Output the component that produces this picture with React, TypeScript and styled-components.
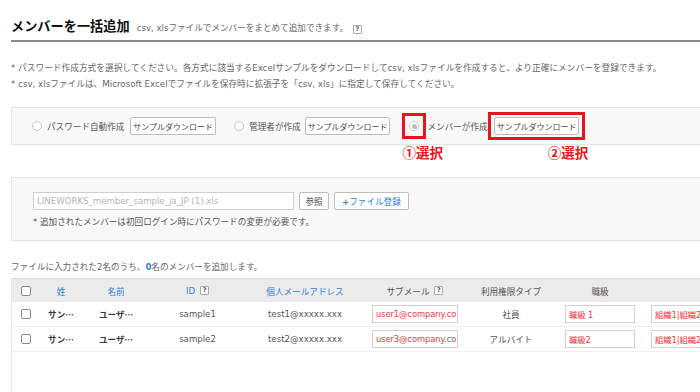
import { createGlobalStyle, styled } from "styled-components";

const GlobalStyle = createGlobalStyle`
  html, body {
    margin: 0;
    background: #fff;
    overflow: hidden;
  }
  body {
    font-family: "DejaVu Sans", "Noto Sans CJK JP", sans-serif;
    color: #555;
  }
  * { box-sizing: border-box; }
`;

const Page = styled.div`
  width: 780px;
  padding-left: 11px;
`;

const Header = styled.div`
  display: flex;
  align-items: baseline;
  height: 42px;
  padding-top: 16px;
  border-bottom: 2px solid #8a8a8a;
  margin-right: 80px;
`;

const Title = styled.h1`
  margin: 0;
  font-size: 13.2px;
  font-weight: 700;
  color: #111;
  font-family: "Noto Sans CJK JP", sans-serif;
`;

const Subtitle = styled.span`
  margin-left: 7px;
  font-size: 8.6px;
  color: #666;
`;

const Help = styled.span<{ $gap?: number }>`
  display: inline-flex;
  align-items: center;
  justify-content: center;
  width: 9px;
  height: 9px;
  margin-left: ${(p) => p.$gap ?? 5}px;
  border: 1px solid #aaa;
  border-radius: 1px;
  background: #fff;
  font-size: 6.5px;
  font-weight: 700;
  color: #555;
  line-height: 1;
  vertical-align: middle;
`;

const Notes = styled.div`
  margin-top: 18px;
  font-size: 8.7px;
  line-height: 16px;
  color: #666;
`;

const Panel = styled.div<{ $height: number; $top: number }>`
  margin-top: ${(p) => p.$top}px;
  height: ${(p) => p.$height}px;
  background: #f8f8f8;
  border: 1px solid #e4e4e4;
`;

const OptionRow = styled.div`
  display: flex;
  align-items: center;
  height: 100%;
  padding-left: 20px;
`;

const Option = styled.div<{ $gap?: number }>`
  display: flex;
  align-items: center;
  margin-right: ${(p) => p.$gap ?? 18}px;
`;

const Radio = styled.span<{ $checked?: boolean }>`
  width: 10px;
  height: 10px;
  border-radius: 50%;
  border: 1px solid #c8c8c8;
  background: #fff;
  display: inline-flex;
  align-items: center;
  justify-content: center;
  &::after {
    content: "";
    display: ${(p) => (p.$checked ? "block" : "none")};
    width: 5px;
    height: 5px;
    border-radius: 50%;
    background: #bdbdbd;
  }
`;

const Label = styled.span<{ $l?: number; $r?: number }>`
  margin-left: ${(p) => p.$l ?? 5}px;
  margin-right: ${(p) => p.$r ?? 5}px;
  font-size: 8.6px;
  color: #555;
`;

const Button = styled.button<{ $blue?: boolean; $pad?: number; $size?: number }>`
  height: 18px;
  padding: 0 ${(p) => p.$pad ?? 2}px;
  background: #fff;
  border: 1px solid #bdbdbd;
  border-radius: 2px;
  font-family: inherit;
  font-size: ${(p) => p.$size ?? 8}px;
  color: ${(p) => (p.$blue ? "#2f7fd6" : "#444")};
  white-space: nowrap;
  cursor: pointer;
`;

const Marker = styled.span<{ $pad: string }>`
  display: inline-flex;
  align-items: center;
  padding: ${(p) => p.$pad};
  border: 3px solid #e8141b;
  position: relative;
`;

const Step = styled.span<{ $left: number; $top: number }>`
  position: absolute;
  left: ${(p) => p.$left}px;
  top: ${(p) => p.$top}px;
  color: #e8141b;
  font-family: "Noto Sans CJK JP", sans-serif;
  font-weight: 700;
  font-size: 13.5px;
  line-height: 1;
  white-space: nowrap;
`;

const UploadBody = styled.div`
  padding: 14px 0 0 21px;
`;

const UploadRow = styled.div`
  display: flex;
  align-items: center;
  gap: 5px;
`;

const FileInput = styled.div`
  width: 261px;
  height: 18px;
  border: 1px solid #cfcfcf;
  background: #fff;
  padding: 0 3px;
  display: flex;
  align-items: center;
  font-size: 8.6px;
  color: #b5b5b5;
`;

const UploadNote = styled.div`
  margin-top: 5px;
  font-size: 8.6px;
  color: #555;
`;

const Summary = styled.div`
  margin-top: 19px;
  font-size: 8.6px;
  color: #666;
  b {
    color: #2f7fd6;
  }
`;

const TableWrap = styled.div`
  margin-top: 6px;
  height: 120px;
  border-left: 1px solid #e6e6e6;
`;

const cols = "28px 42px 68px 95px 120px 100px 92px 86px 160px";

const HeadRow = styled.div`
  display: grid;
  grid-template-columns: ${cols};
  height: 24px;
  background: #ebebeb;
  border-top: 1px solid #dcdcdc;
`;

const Row = styled.div`
  display: grid;
  grid-template-columns: ${cols};
  height: 25px;
  border-bottom: 1px solid #efefef;
`;

const Cell = styled.div<{ $align?: string; $blue?: boolean; $dark?: boolean; $pl?: number }>`
  display: flex;
  align-items: center;
  justify-content: ${(p) => p.$align ?? "center"};
  padding: 0 7px;
  padding-left: ${(p) => p.$pl ?? 7}px;
  font-size: 8.6px;
  white-space: nowrap;
  overflow: hidden;
  color: ${(p) => (p.$blue ? "#2f7fd6" : p.$dark ? "#3a3a3a" : "#555")};
  font-weight: ${(p) => (p.$dark ? 700 : 400)};
  font-family: ${(p) => (p.$dark ? '"Noto Sans CJK JP", sans-serif' : "inherit")};
`;

const Check = styled.span`
  width: 10px;
  height: 10px;
  border: 1px solid #8a8a8a;
  border-radius: 2px;
  background: #fff;
`;

const CellInput = styled.div<{ $width: number }>`
  width: ${(p) => p.$width}px;
  height: 18px;
  border: 1px solid #d0d0d0;
  background: #fff;
  padding: 0 3px;
  display: flex;
  align-items: center;
  font-size: 8.4px;
  letter-spacing: -0.1px;
  color: #f0353b;
  overflow: hidden;
  white-space: nowrap;
`;

const rows = [
  { id: "sample1", mail: "test1@xxxxx.xxx", sub: "user1@company.co", type: "社員", rank: "職級 1" },
  { id: "sample2", mail: "test2@xxxxx.xxx", sub: "user3@company.co", type: "アルバイト", rank: "職級2" },
];

export default function App() {
  return (
    <>
      <GlobalStyle />
      <Page>
        <Header>
          <Title>メンバーを一括追加</Title>
          <Subtitle>csv, xlsファイルでメンバーをまとめて追加できます。</Subtitle>
          <Help>?</Help>
        </Header>

        <Notes>
          <div>* パスワード作成方式を選択してください。各方式に該当するExcelサンプルをダウンロードしてcsv, xlsファイルを作成すると、より正確にメンバーを登録できます。</div>
          <div>* csv, xlsファイルは、Microsoft Excelでファイルを保存時に拡張子を「csv, xls」に指定して保存してください。</div>
        </Notes>

        <Panel $top={15} $height={38}>
          <OptionRow>
            <Option>
              <Radio />
              <Label $r={6}>パスワード自動作成</Label>
              <Button>サンプルダウンロード</Button>
            </Option>
            <Option $gap={12}>
              <Radio />
              <Label $r={4}>管理者が作成</Label>
              <Button>サンプルダウンロード</Button>
            </Option>
            <Option>
              <Marker $pad="5px 4px">
                <Radio $checked />
                <Step $left={-3} $top={30}>①選択</Step>
              </Marker>
              <Label $l={1} $r={0}>メンバーが作成</Label>
              <Marker $pad="2px 3px">
                <Button>サンプルダウンロード</Button>
                <Step $left={57} $top={31}>②選択</Step>
              </Marker>
            </Option>
          </OptionRow>
        </Panel>

        <Panel $top={32} $height={64}>
          <UploadBody>
            <UploadRow>
              <FileInput>LINEWORKS_member_sample_ja_JP (1).xls</FileInput>
              <Button $size={8.6} style={{ width: 30 }}>参照</Button>
              <Button $blue $pad={7} $size={8.6}>
                <b>+</b>ファイル登録
              </Button>
            </UploadRow>
            <UploadNote>* 追加されたメンバーは初回ログイン時にパスワードの変更が必要です。</UploadNote>
          </UploadBody>
        </Panel>

        <Summary>
          ファイルに入力された2名のうち、<b>0</b>名のメンバーを追加します。
        </Summary>

        <TableWrap>
          <HeadRow>
            <Cell $align="flex-start" $pl={9}>
              <Check />
            </Cell>
            <Cell $blue>姓</Cell>
            <Cell $blue>名前</Cell>
            <Cell $blue>
              ID<Help>?</Help>
            </Cell>
            <Cell $blue>個人メールアドレス</Cell>
            <Cell>
              サブメール<Help>?</Help>
            </Cell>
            <Cell>利用権限タイプ</Cell>
            <Cell>職級</Cell>
            <Cell />
          </HeadRow>
          {rows.map((r) => (
            <Row key={r.id}>
              <Cell $align="flex-start" $pl={9}>
                <Check />
              </Cell>
              <Cell $dark>サン…</Cell>
              <Cell $dark>ユーザ…</Cell>
              <Cell>{r.id}</Cell>
              <Cell>{r.mail}</Cell>
              <Cell>
                <CellInput $width={87}>{r.sub}</CellInput>
              </Cell>
              <Cell>{r.type}</Cell>
              <Cell>
                <CellInput $width={70}>{r.rank}</CellInput>
              </Cell>
              <Cell $align="flex-start" $pl={8}>
                <CellInput $width={130}>組織1|組織2</CellInput>
              </Cell>
            </Row>
          ))}
        </TableWrap>
      </Page>
    </>
  );
}
